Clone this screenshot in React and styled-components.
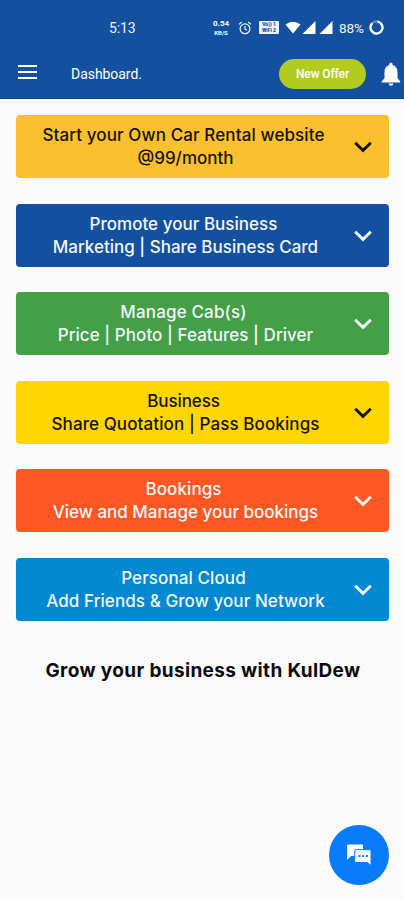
import styled, { createGlobalStyle } from "styled-components";

const GlobalStyle = createGlobalStyle`
    * {
        box-sizing: border-box;
    }

    body {
        margin: 0;
        background-color: #fafafa;
    }
`

const Screen = styled.div`
    position: relative;
    height: 900px;
    overflow: hidden;
    background-color: #fafafa;
    font-family: Inter, "Noto Sans", sans-serif;
`

const Header = styled.header`
    height: 99px;
    background-color: #1351a0;
    border-bottom: 1px solid #0c4289;
    color: white;
    font-family: Roboto, sans-serif;
`

const StatusBar = styled.div`
    height: 54px;
    padding: 1px 20px 0 109px;
    display: flex;
    align-items: center;
    color: #eef4fc;
`

const Clock = styled.span`
    flex: 1;
    font-size: 14px;
    letter-spacing: -0.1px;
`

const NetSpeed = styled.div`
    width: 18px;
    margin-right: 8px;
    display: flex;
    flex-direction: column;
    align-items: center;
    font-size: 8px;
    font-weight: 800;
    line-height: 10px;
    white-space: nowrap;

    small {
        font-size: 6px;
        line-height: 7px;
    }
`

const VoBadge = styled.div`
    width: 20px;
    height: 13px;
    margin: 0 6px 0 7px;
    padding-top: 1px;
    border-radius: 1px;
    background-color: #eef4fc;
    color: #1351a0;
    font-size: 5px;
    font-weight: 900;
    line-height: 5.5px;
    text-align: center;
    white-space: nowrap;
`

const Signals = styled.div`
    display: flex;
    gap: 3px;
    margin: 0 6px 0 1px;
`

const Battery = styled.span`
    width: 26px;
    margin-right: 4px;
    font-size: 13.5px;
    letter-spacing: -0.1px;
`

const Toolbar = styled.div`
    height: 44px;
    margin-top: -2px;
    padding: 0 3px 0 18px;
    display: flex;
    align-items: center;
`

const Burger = styled.div`
    width: 19px;
    height: 14px;
    margin-bottom: 5px;
    display: flex;
    flex-direction: column;
    justify-content: space-between;

    i {
        height: 2px;
        background-color: white;
    }
`

const PageTitle = styled.span`
    flex: 1;
    margin-left: 34px;
    font-size: 14px;
    letter-spacing: -0.05px;
`

const OfferButton = styled.button`
    width: 87px;
    height: 30px;
    margin-right: 15px;
    padding: 0;
    border: none;
    border-radius: 99px;
    background-color: #b1cb1e;
    color: white;
    font-family: Roboto, sans-serif;
    font-size: 12px;
    font-weight: 500;
    letter-spacing: -0.1px;
`

const CardList = styled.main`
    padding: 16px 15px 0 16px;
    display: flex;
    flex-direction: column;
    gap: 25.5px;
`

const Card = styled.section`
    height: 63px;
    padding: 1px 17px 0 0;
    border-radius: 4px;
    background-color: ${({ $bg }) => $bg};
    color: ${({ $dark }) => ($dark ? "#15120a" : "#f3f7fa")};
    display: flex;
    align-items: center;
`

const CardText = styled.div`
    flex: 1;
    padding-right: 3px;
    font-size: 17px;
    font-weight: 500;
    line-height: 23px;
    text-align: center;
    white-space: nowrap;
`

const Line = styled.div`
    letter-spacing: ${({ $spacing }) => $spacing}px;

    & + & {
        padding-left: 4px;
    }
`

const Tagline = styled.h2`
    margin: 37.5px 0 0;
    padding-left: 2px;
    font-size: 19px;
    font-weight: 700;
    line-height: 26px;
    letter-spacing: 0.35px;
    text-align: center;
    white-space: nowrap;
    color: #0b0b0b;
`

const ChatButton = styled.button`
    position: absolute;
    right: 15px;
    bottom: 15px;
    width: 60px;
    height: 60px;
    padding: 0;
    border: none;
    border-radius: 50%;
    background-color: #087bfb;
    display: flex;
    align-items: center;
    justify-content: center;
`

const cards = [
    { bg: "#fbc02d", dark: true, lines: [["Start your Own Car Rental website", 0.11], ["@99/month", 0]] },
    { bg: "#1351a0", lines: [["Promote your Business", 0.03], ["Marketing | Share Business Card", 0]] },
    { bg: "#43a047", lines: [["Manage Cab(s)", 0.15], ["Price | Photo | Features | Driver", 0.05]] },
    { bg: "#ffd600", dark: true, lines: [["Business", -0.1], ["Share Quotation | Pass Bookings", 0.1]] },
    { bg: "#ff5722", lines: [["Bookings", 0.1], ["View and Manage your bookings", 0]] },
    { bg: "#0288d1", lines: [["Personal Cloud", 0.1], ["Add Friends & Grow your Network", 0.08]] },
];

function AlarmIcon() {
    return (
        <svg width="14" height="14" viewBox="0 0 14 14" fill="none" stroke="currentColor" strokeWidth="1.2">
            <circle cx="7" cy="7.8" r="4.9" />
            <path d="M7 5v3l2 1.2M1 3.4 3.8 1M13 3.4 10.2 1" />
        </svg>
    );
}

function WifiIcon() {
    return (
        <svg width="16" height="13" viewBox="0 0 16 13" fill="white">
            <path d="M0.5 3.5Q8-2.2 15.5 3.5L8 12.5Z" />
        </svg>
    );
}

function SignalIcon() {
    return (
        <svg width="14" height="13" viewBox="0 0 14 13" fill="white">
            <path d="M13.5 0v13H0.5Z" />
        </svg>
    );
}

function BatteryRing() {
    return (
        <svg width="15" height="15" viewBox="0 0 15 15" fill="none" strokeWidth="2.3">
            <circle cx="7.5" cy="7.5" r="6" stroke="#5d8ac2" />
            <path d="M8.5 1.6A6 6 0 1 1 3.2 3.3" stroke="white" />
        </svg>
    );
}

function BellIcon() {
    return (
        <svg width="20" height="24" viewBox="0 0 20 24" fill="white">
            <path d="M8.4 2.2a1.6 1.6 0 0 1 3.2 0v.9c3.2.8 4.9 3.5 4.9 6.9v6.3l2.7 2.9v1.2H.8v-1.2l2.7-2.9V10c0-3.4 1.7-6.1 4.9-6.9ZM7.7 21.4h4.6a2.3 2.3 0 0 1-4.6 0Z" />
        </svg>
    );
}

function ChevronIcon() {
    return (
        <svg width="18" height="12" viewBox="0 0 18 12" fill="none" stroke="currentColor" strokeWidth="2.9">
            <path d="M1.2 1.8 9 9.4l7.8-7.6" />
        </svg>
    );
}

function ChatIcon() {
    return (
        <svg width="26" height="22" viewBox="0 0 26 22">
            <path d="M2 .5h14a1 1 0 0 1 1 1V12H5l-4 4V1.5a1 1 0 0 1 1-1Z" fill="white" />
            <path d="M10 5.7h14a1 1 0 0 1 1 1V21.5l-3.6-3H10a1.3 1.3 0 0 1-1.3-1.3V7a1.3 1.3 0 0 1 1.3-1.3Z" fill="white" stroke="#087bfb" />
            <path d="M12.5 11h2v2h-2zM16.2 11h2v2h-2zM19.9 11h2v2h-2z" fill="#087bfb" />
        </svg>
    );
}

function DashboardCard({ card }) {
    return (
        <Card $bg={card.bg} $dark={card.dark}>
            <CardText>
                {card.lines.map(([text, spacing]) => (
                    <Line key={text} $spacing={spacing}>{text}</Line>
                ))}
            </CardText>
            <ChevronIcon />
        </Card>
    );
}

function App() {
    return (
        <Screen>
            <GlobalStyle />
            <Header>
                <StatusBar>
                    <Clock>5:13</Clock>
                    <NetSpeed>0.54<small>KB/S</small></NetSpeed>
                    <AlarmIcon />
                    <VoBadge>Vo)) 1<br />WiFi 2</VoBadge>
                    <WifiIcon />
                    <Signals>
                        <SignalIcon />
                        <SignalIcon />
                    </Signals>
                    <Battery>88%</Battery>
                    <BatteryRing />
                </StatusBar>
                <Toolbar>
                    <Burger><i /><i /><i /></Burger>
                    <PageTitle>Dashboard.</PageTitle>
                    <OfferButton>New Offer</OfferButton>
                    <BellIcon />
                </Toolbar>
            </Header>
            <CardList>
                {cards.map((card) => (
                    <DashboardCard key={card.bg} card={card} />
                ))}
            </CardList>
            <Tagline>Grow your business with KulDew</Tagline>
            <ChatButton><ChatIcon /></ChatButton>
        </Screen>
    );
}

export default App;
